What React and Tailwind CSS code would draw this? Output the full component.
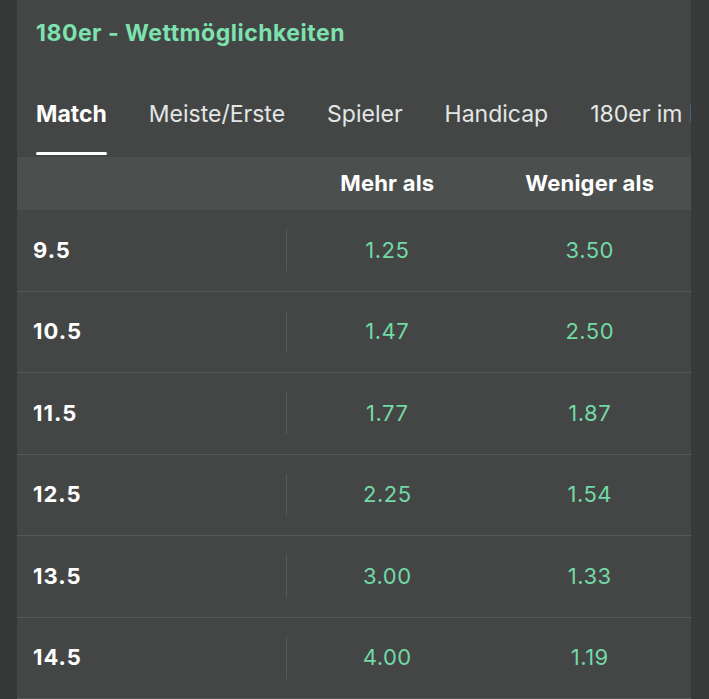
import React from "react";

const TABS = ["Match", "Meiste/Erste", "Spieler", "Handicap", "180er im Leg"];

const ROWS = [
  { line: "9.5", over: "1.25", under: "3.50" },
  { line: "10.5", over: "1.47", under: "2.50" },
  { line: "11.5", over: "1.77", under: "1.87" },
  { line: "12.5", over: "2.25", under: "1.54" },
  { line: "13.5", over: "3.00", under: "1.33" },
  { line: "14.5", over: "4.00", under: "1.19" },
];

export default function App() {
  return (
    <div
      className="flex h-[699px] w-full overflow-hidden bg-[#363837] text-white"
      style={{ fontFamily: "Inter, 'Liberation Sans', sans-serif" }}
    >
      <div className="w-[17px] shrink-0" />

      <main className="flex min-w-0 flex-1 flex-col bg-[#434645]">
        {/* Titel */}
        <h1 className="pl-[19px] pt-[19px] text-[23px] font-bold leading-[28px] tracking-[0.5px] text-[#7ee2b0]">
          180er - Wettmöglichkeiten
        </h1>

        {/* Tabs */}
        <nav className="mt-[53px] flex gap-[42px] overflow-hidden whitespace-nowrap pl-[19px] pr-[17px]">
          {TABS.map((tab, i) => (
            <div key={tab} className="flex shrink-0 flex-col">
              <span
                className={
                  "text-[23px] leading-[28px] " +
                  (i === 0 ? "font-bold text-white" : "text-[#e4e6e5]")
                }
              >
                {tab}
              </span>
              <span
                className={
                  "mt-[24px] h-[3px] rounded-full " +
                  (i === 0 ? "bg-white" : "bg-transparent")
                }
              />
            </div>
          ))}
        </nav>

        {/* Kopfzeile */}
        <div className="mt-[2px] grid h-[54px] grid-cols-[269px_1fr_1fr] items-center bg-[#4b4f4e] text-[22px] font-bold tracking-[0.2px]">
          <span />
          <span className="text-center">Mehr als</span>
          <span className="text-center">Weniger als</span>
        </div>

        {/* Zeilen */}
        {ROWS.map((r) => (
          <div
            key={r.line}
            className="grid h-[81.5px] shrink-0 grid-cols-[269px_1fr_1fr] items-center border-b border-[#565958]"
          >
            <span className="pl-4 text-[22px] font-bold tracking-[1px]">
              {r.line}
            </span>
            <div className="relative flex h-full items-center justify-center">
              <span className="absolute left-0 top-[19px] h-[42px] w-px bg-[#575a59]" />
              <span className="text-[22px] tracking-[0.5px] text-[#72d9a6]">
                {r.over}
              </span>
            </div>
            <span className="text-center text-[22px] tracking-[0.5px] text-[#72d9a6]">
              {r.under}
            </span>
          </div>
        ))}
      </main>

      <div className="w-[18px] shrink-0 bg-[#383a39]" />
    </div>
  );
}
